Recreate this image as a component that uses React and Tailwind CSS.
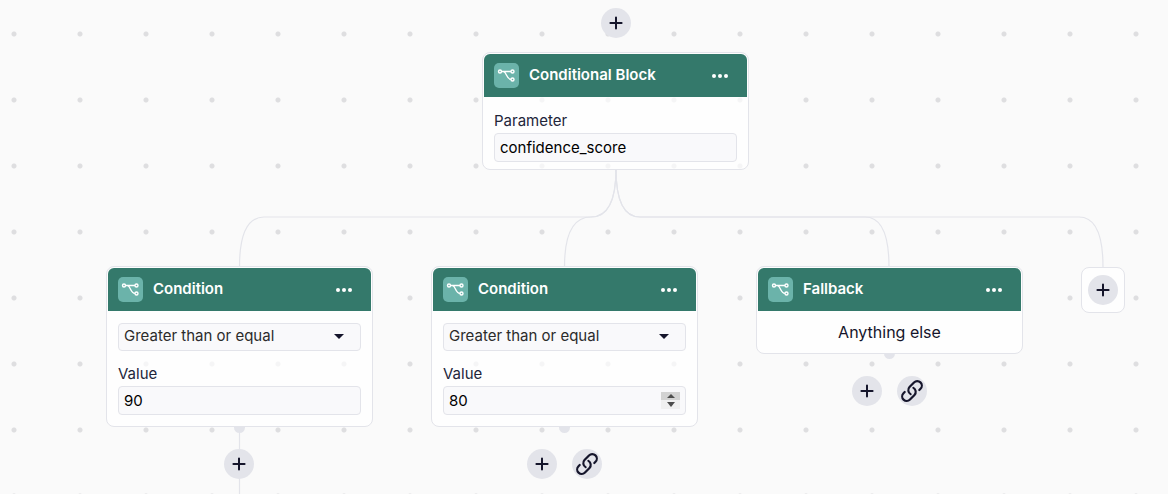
import { useId } from 'react';

const LINES = [
    'M616 169 Q616 217 591 217 H264 Q239.5 217 239.5 267',
    'M616 169 Q616 217 591 217 Q564.5 217 564.5 267',
    'M616 169 Q616 217 640 217 H865 Q889 217 889 267',
    'M616 169 Q616 217 640 217 H1079 Q1103 217 1103 267',
    'M239.5 427 V520',
];

function PlusIcon() {
    return (
        <svg viewBox="0 0 14 14" className="size-3.5" fill="none" stroke="currentColor" strokeWidth="2" strokeLinecap="round" aria-hidden="true">
            <path d="M7 1.4v11.2M1.4 7h11.2" />
        </svg>
    );
}

function LinkIcon() {
    return (
        <svg viewBox="0 0 24 24" className="size-6 shrink-0" fill="none" stroke="currentColor" strokeWidth="2.2" strokeLinecap="round" strokeLinejoin="round" aria-hidden="true">
            <path d="M13.4 8.9a4.5 4.5 0 0 1 1.1 7l-4.5 4.7a4.5 4.5 0 0 1-6.5-6.4l1.2-1.2m14.6-2 1.2-1.2a4.5 4.5 0 0 0-6.5-6.4l-4.5 4.7a4.5 4.5 0 0 0 1.1 7" />
        </svg>
    );
}

function BranchIcon() {
    return (
        <svg viewBox="0 0 25 25" className="block size-[25px]" fill="none" stroke="white" strokeWidth="1.4" aria-hidden="true">
            <circle cx="6" cy="8.5" r="1.5" />
            <circle cx="18.5" cy="8.5" r="1.5" />
            <circle cx="18.5" cy="16.5" r="1.5" />
            <path d="M7.5 8.5H17M9.5 8.6C12.8 9.2 12.2 16 17 16.4" />
        </svg>
    );
}

function RoundButton({ label, children }) {
    return (
        <button type="button" aria-label={label} className="flex size-[30px] items-center justify-center rounded-full bg-[#e3e4ea] text-[#15152b]">
            {children}
        </button>
    );
}

function Block({ title, className, children }) {
    return (
        <section className={`absolute w-[267px] rounded-lg border border-[#e3e4ea] bg-white/70 p-px ${className}`}>
            <header className="flex h-[43px] items-center rounded-t-md bg-[#34796b] px-2.5">
                <span className="rounded-[5px] bg-[#6bb3aa]">
                    <BranchIcon />
                </span>
                <h2 className="ml-2.5 flex-1 text-[15px] font-semibold text-white">{title}</h2>
                <button type="button" aria-label={`${title} options`} className="px-2 text-white">
                    <svg viewBox="0 0 18 4" className="h-1 w-[18px]" fill="currentColor" aria-hidden="true">
                        <circle cx="3" cy="2" r="2" />
                        <circle cx="9" cy="2" r="2" />
                        <circle cx="15" cy="2" r="2" />
                    </svg>
                </button>
            </header>
            {children}
        </section>
    );
}

function Field({ label, value, stepper }) {
    const id = useId();
    return (
        <div>
            <label htmlFor={id} className="block h-5 text-[15px] leading-4 text-[#22253a]">{label}</label>
            <div className="flex h-[29px] items-center rounded border border-[#e3e4ea] bg-[#f9f9fb] px-[5px]">
                <input id={id} defaultValue={value} className="w-full min-w-0 bg-transparent pt-0.5 text-[15px] text-black outline-none" />
                {stepper && (
                    <div className="flex h-[17px] w-[19px] shrink-0 flex-col text-[#4d4d4d]">
                        <button type="button" aria-label="Increase" className="flex h-2 items-center justify-center bg-[#d2d2d2]">
                            <svg viewBox="0 0 8 4" className="h-1 w-2" fill="currentColor" aria-hidden="true"><path d="M0 4 4 0l4 4z" /></svg>
                        </button>
                        <button type="button" aria-label="Decrease" className="flex h-[9px] items-center justify-center bg-[#f0f0f0]">
                            <svg viewBox="0 0 8 5" className="h-[5px] w-2" fill="currentColor" aria-hidden="true"><path d="m0 0 4 5 4-5z" /></svg>
                        </button>
                    </div>
                )}
            </div>
        </div>
    );
}

function ConditionBody({ value, stepper }) {
    return (
        <div className="px-2.5 pt-3 pb-2.5">
            <div className="relative mb-[15px]">
                <select aria-label="Operator" className="block h-7 w-full appearance-none rounded border border-[#e3e4ea] bg-[#f9f9fb] px-[5px] pb-0.5 text-[15px] text-[#2b2b2b]">
                    <option>Greater than or equal</option>
                    <option>Less than or equal</option>
                    <option>Equal</option>
                </select>
                <svg viewBox="0 0 10 5" className="pointer-events-none absolute top-[11px] right-[17px] h-[5px] w-2.5" fill="#15152b" aria-hidden="true">
                    <path d="M0 0h10L5 5z" />
                </svg>
            </div>
            <Field label="Value" value={value} stepper={stepper} />
        </div>
    );
}

function Handle({ className }) {
    return <span className={`absolute h-1.5 w-[11px] rounded-b-full bg-[#e3e4ea] ${className}`} />;
}

export default function App() {
    return (
        <main
            className="relative min-h-screen overflow-hidden bg-[#fafafa] bg-[radial-gradient(circle_at_center,#dedee0_2px,transparent_3px)] bg-[length:66px_66px] bg-[position:-19px_1px] font-[Inter,sans-serif] text-[#15152b]"
        >
            <svg width="1168" height="520" className="absolute top-0 left-0" fill="none" stroke="#e3e4ea" strokeWidth="1.2" aria-hidden="true">
                {LINES.map((d) => <path key={d} d={d} />)}
            </svg>

            <div className="absolute top-2 left-[601px]">
                <RoundButton label="Add block before"><PlusIcon /></RoundButton>
            </div>

            <Block title="Conditional Block" className="top-[52px] left-[482px]">
                <div className="px-2.5 pt-4 pb-1.5">
                    <Field label="Parameter" value="confidence_score" />
                </div>
            </Block>

            <Block title="Condition" className="top-[266px] left-[106px]">
                <ConditionBody value="90" />
            </Block>
            <Handle className="top-[427px] left-[234px]" />
            <div className="absolute top-[449px] left-[224px]">
                <RoundButton label="Add block"><PlusIcon /></RoundButton>
            </div>

            <Block title="Condition" className="top-[266px] left-[431px]">
                <ConditionBody value="80" stepper />
            </Block>
            <Handle className="top-[427px] left-[559px]" />
            <div className="absolute top-[449px] left-[527px] flex gap-[15px]">
                <RoundButton label="Add block"><PlusIcon /></RoundButton>
                <RoundButton label="Link block"><LinkIcon /></RoundButton>
            </div>

            <Block title="Fallback" className="top-[266px] left-[756px]">
                <p className="pt-[9px] pb-2 text-center text-base">Anything else</p>
            </Block>
            <Handle className="top-[353px] left-[884px]" />
            <div className="absolute top-[376px] left-[852px] flex gap-[15px]">
                <RoundButton label="Add block"><PlusIcon /></RoundButton>
                <RoundButton label="Link block"><LinkIcon /></RoundButton>
            </div>

            <div className="absolute top-[267px] left-[1081px] rounded-lg border border-[#e3e4ea] bg-white/80 px-1.5 py-[7px]">
                <RoundButton label="Add condition"><PlusIcon /></RoundButton>
            </div>
        </main>
    );
}
